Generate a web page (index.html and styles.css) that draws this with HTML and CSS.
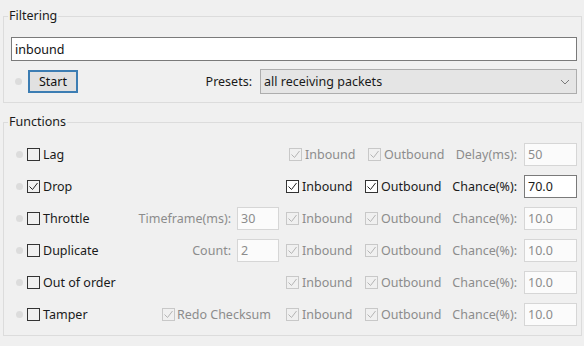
FILE: index.html
```html
<!DOCTYPE html>
<html lang="en">
<head>
  <meta charset="UTF-8">
  <title>clumsy</title>
  <link rel="stylesheet" href="styles.css">
</head>
<body>

  <fieldset class="group filtering">
    <legend>Filtering</legend>
    <input class="filter" type="text" value="inbound">
    <div class="start-row">
      <span class="dot"></span>
      <button class="start">Start</button>
      <span class="spacer"></span>
      <span class="presets-label">Presets:</span>
      <div class="select">
        <span>all receiving packets</span>
        <svg class="chevron" width="10" height="6" viewBox="0 0 10 6"><polyline points="1,1 5,5 9,1" fill="none" stroke="#7a7a7a" stroke-width="1"/></svg>
      </div>
    </div>
  </fieldset>

  <fieldset class="group functions">
    <legend>Functions</legend>
    <div id="rows"></div>
  </fieldset>

  <script>
    const functions = [
      { name: "Lag", on: false, lag: true, valueLabel: "Delay(ms):", value: "50" },
      { name: "Drop", on: true, valueLabel: "Chance(%):", value: "70.0" },
      { name: "Throttle", on: false, paramLabel: "Timeframe(ms):", param: "30", valueLabel: "Chance(%):", value: "10.0" },
      { name: "Duplicate", on: false, paramLabel: "Count:", param: "2", valueLabel: "Chance(%):", value: "10.0" },
      { name: "Out of order", on: false, valueLabel: "Chance(%):", value: "10.0" },
      { name: "Tamper", on: false, checksum: true, valueLabel: "Chance(%):", value: "10.0" }
    ];

    const tick = `<svg width="11" height="11" viewBox="0 0 11 11"><polyline points="1.5,5.5 4.5,8.5 9.5,2" fill="none" stroke="currentColor" stroke-width="1"/></svg>`;

    function box(checked) {
      return `<span class="box">${checked ? tick : ''}</span>`;
    }

    const rows = document.getElementById('rows');

    functions.forEach(fn => {
      const state = fn.on ? 'enabled' : 'disabled';
      let param = '';
      if (fn.paramLabel) {
        param = `<span class="param"><span>${fn.paramLabel}</span><span class="field small">${fn.param}</span></span>`;
      } else if (fn.checksum) {
        param = `<span class="param checksum">${box(true)}<span>Redo Checksum</span></span>`;
      }

      const row = document.createElement('div');
      row.className = `row ${state}${fn.lag ? ' lag' : ''}`;
      row.innerHTML = `
        <span class="dot"></span>
        <span class="name">${box(fn.on)}<span>${fn.name}</span></span>
        ${param}
        <span class="dir in">${box(true)}<span>Inbound</span></span>
        <span class="dir out">${box(true)}<span>Outbound</span></span>
        <span class="value-label">${fn.valueLabel}</span>
        <span class="field">${fn.value}</span>
      `;
      rows.appendChild(row);
    });
  </script>

</body>
</html>
```

FILE: styles.css
```css
body {
  margin: 0;
  padding-top: 7px;
  background-color: #f0f0f0;
  font-family: "Noto Sans", "Open Sans", sans-serif;
  font-size: 12.5px;
  color: #1a1a1a;
}

.group {
  margin: 0 2px 0 3px;
  padding: 0 4px 0 7px;
  border: 1px solid #dcdcdc;
  min-width: 0;
}

.group legend {
  margin-left: -3px;
  padding: 0 1px;
  height: 18px;
  line-height: 18px;
}

.filtering {
  padding-top: 12px;
  padding-bottom: 8px;
}

.functions {
  margin-top: 10px;
  padding-top: 7px;
  padding-bottom: 5px;
}

.dot {
  width: 7px;
  height: 7px;
  border-radius: 50%;
  background-color: #dcdcdc;
  flex: none;
}

.filter {
  display: block;
  box-sizing: border-box;
  width: 100%;
  height: 24px;
  margin: 0;
  padding: 0 3px;
  border: 1px solid #7a7a7a;
  background: #fff;
  font: inherit;
  color: #111;
  outline: none;
}

.start-row {
  display: flex;
  align-items: center;
  height: 25px;
  margin-top: 8px;
}

.start-row .dot {
  margin: 0 6px 0 4px;
}

.start {
  box-sizing: border-box;
  width: 50px;
  height: 23px;
  padding: 0;
  border: 2px solid #3c7db3;
  background-color: #e1e1e1;
  font: inherit;
  color: #111;
}

.spacer {
  flex: 1;
}

.presets-label {
  margin-right: 8px;
}

.select {
  box-sizing: border-box;
  display: flex;
  align-items: center;
  justify-content: space-between;
  width: 317px;
  height: 25px;
  padding: 0 6px 0 3px;
  border: 1px solid #adadad;
  background-color: #e5e5e5;
}

.row {
  display: flex;
  align-items: center;
  height: 32px;
}

.row .dot {
  margin: 0 4px 0 5px;
}

.box {
  box-sizing: border-box;
  display: inline-flex;
  align-items: center;
  justify-content: center;
  width: 13px;
  height: 13px;
  border: 1px solid #333;
  background: #fff;
  color: #222;
  flex: none;
}

.name {
  flex: 1;
  display: flex;
  align-items: center;
  gap: 3px;
}

.name .box {
  background: none;
}

.param,
.dir {
  display: flex;
  align-items: center;
}

.param {
  gap: 6px;
}

.checksum {
  gap: 2px;
  padding-right: 8px;
}

.dir {
  gap: 3px;
}

.in {
  width: 79px;
  margin-left: 7px;
}

.out {
  width: 82px;
}

.lag .in {
  margin-left: 10px;
  width: 79px;
}

.lag .out {
  width: 79px;
}

.value-label {
  width: 70px;
  text-align: right;
  margin-right: 7px;
}

.field {
  box-sizing: border-box;
  width: 53px;
  height: 23px;
  line-height: 21px;
  padding: 0 3px;
  border: 1px solid #7a7a7a;
  background: #fff;
}

.field.small {
  width: 42px;
}

.disabled .param,
.disabled .dir,
.disabled .value-label,
.disabled .field {
  color: #8c8c8c;
}

.disabled .param .box,
.disabled .dir .box {
  border-color: #c8c8c8;
  color: #b4b4b4;
  background: none;
}

.disabled .field {
  border-color: #d6d6d6;
  background: #fbfbfb;
}
```
